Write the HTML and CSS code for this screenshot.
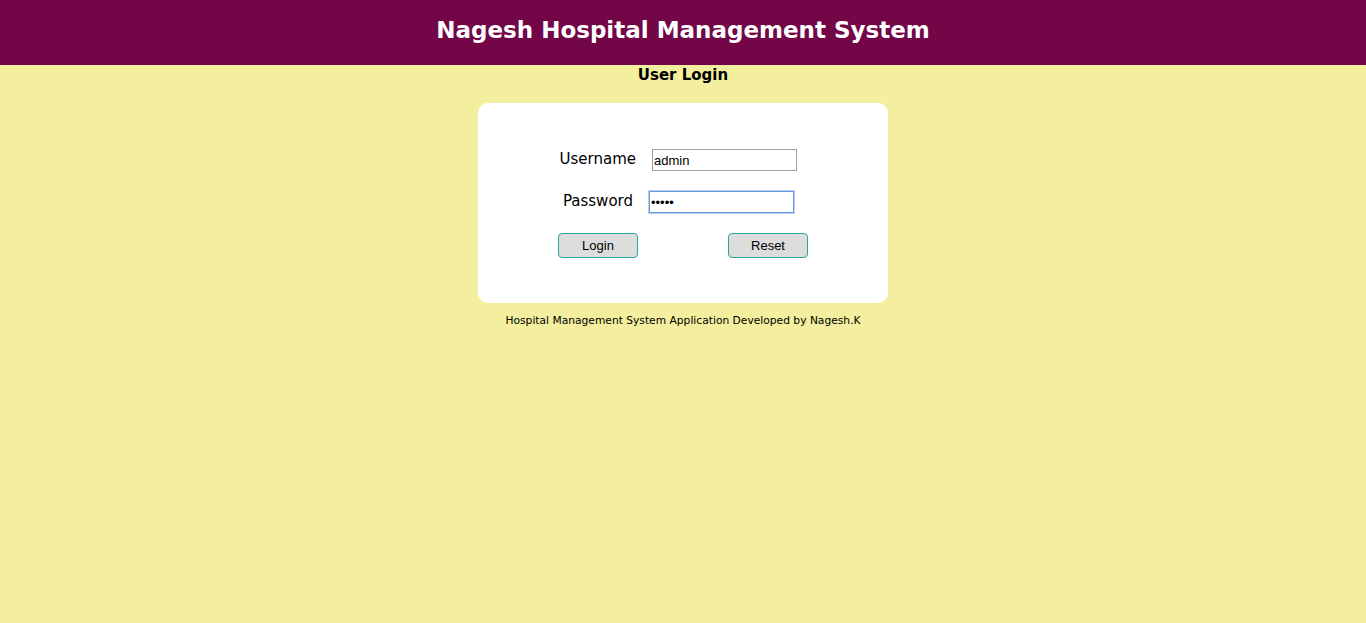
FILE: index.html
```html
<!DOCTYPE html>
<html>
<head>
<meta charset="utf-8">
<title>Nagesh Hospital Management System</title>
<link rel="stylesheet" href="styles.css">
</head>
<body>
<header class="topbar"><h1 class="title">Nagesh Hospital Management System</h1></header>
<main class="content">
  <h2 class="subtitle">User Login</h2>
  <form class="card">
    <div class="row">
      <label class="label" for="u">Username</label>
      <input class="field field-user" id="u" type="text" value="admin">
    </div>
    <div class="row">
      <label class="label" for="p">Password</label>
      <input class="field field-pass" id="p" type="password" value="admin" autofocus>
    </div>
    <div class="row buttons">
      <button class="btn" type="button">Login</button>
      <button class="btn btn-reset" type="reset">Reset</button>
    </div>
  </form>
  <p class="footer">Hospital Management System Application Developed by Nagesh.K</p>
</main>
</body>
</html>
```
FILE: styles.css
```css
html, body {
  margin: 0;
  padding: 0;
  height: 100%;
}
body {
  background: #f3ef9f;
  font-family: "DejaVu Sans", Verdana, sans-serif;
  color: #000;
}
.topbar {
  background: #720647;
  height: 65px;
  display: flex;
  align-items: center;
  justify-content: center;
}
.title {
  margin: 0;
  color: #fff;
  font-size: 23px;
  font-weight: bold;
  transform: translateY(-3px);
}
.content {
  display: flex;
  flex-direction: column;
  align-items: center;
}
.subtitle {
  margin: 1px 0 0;
  font-size: 15px;
  font-weight: bold;
  line-height: 18px;
}
.card {
  box-sizing: border-box;
  width: 410px;
  height: 200px;
  margin-top: 19px;
  background: #fff;
  border-radius: 10px;
  padding-top: 46px;
}
.row {
  display: flex;
  align-items: center;
  height: 22px;
  margin-bottom: 20px;
}
.label {
  text-align: right;
  font-size: 15px;
  box-sizing: border-box;
  transform: translateY(-1px);
}
.row:nth-child(1) .label { width: 158px; }
.row:nth-child(2) .label { width: 155px; }
.field {
  box-sizing: border-box;
  width: 145px;
  height: 22px;
  border: 1px solid #a0a0a0;
  font-family: "Liberation Sans", Arial, sans-serif;
  font-size: 13px;
  padding: 1px 1px;
  outline: none;
}
.field-user { margin-left: 16px; }
.field-pass {
  margin-left: 16px;
  border: 1px solid #6b98e0;
  box-shadow: 0 0 0 1px #b8cdf0;
}
.buttons {
  height: 25px;
}
.btn {
  box-sizing: border-box;
  width: 80px;
  height: 25px;
  margin-left: 80px;
  background: #dddddd;
  border: 1px solid #28a7a0;
  border-radius: 4px;
  font-family: "Liberation Sans", Arial, sans-serif;
  font-size: 13px;
  color: #000;
  padding: 0;
}
.btn-reset { margin-left: 90px; }
.footer {
  margin: 11px 0 0;
  font-size: 10.7px;
  line-height: 14px;
}
```
